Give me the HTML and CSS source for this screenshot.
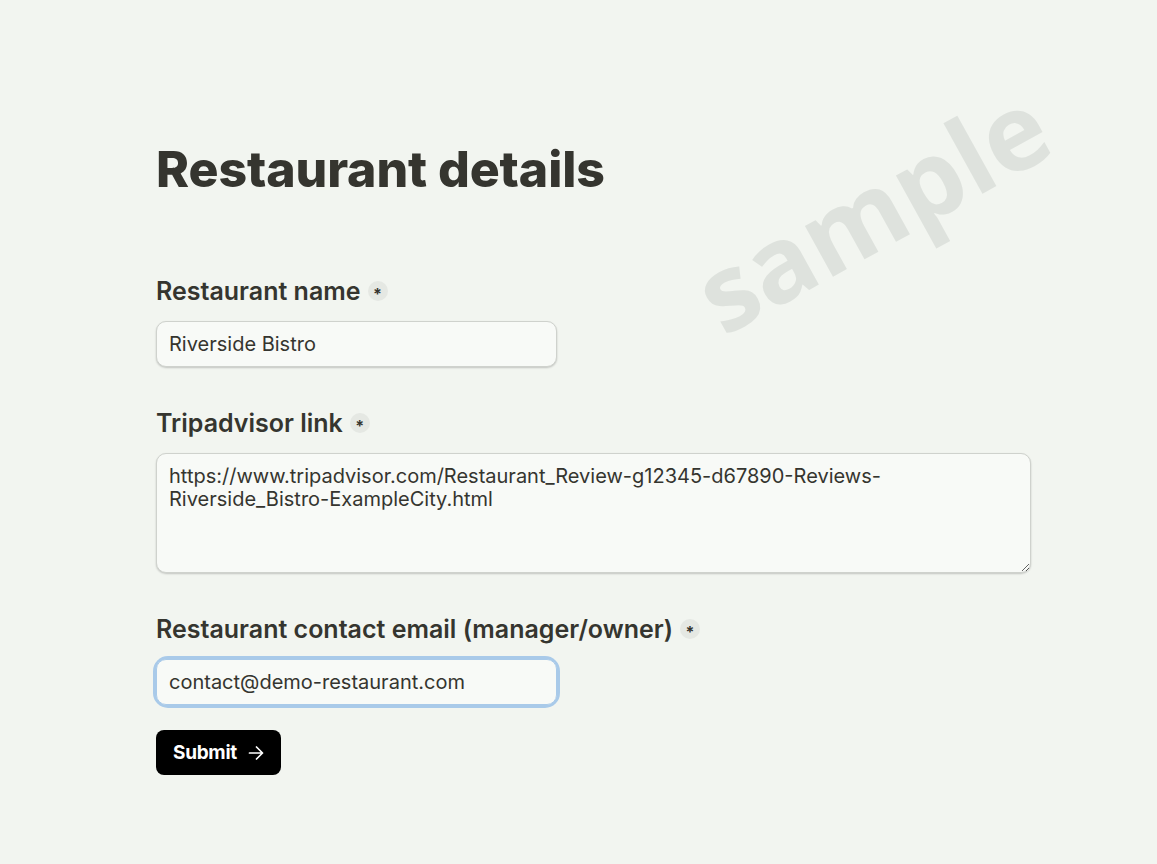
FILE: index.html
```html
<!DOCTYPE html>
<html>
  <head>
    <title>Restaurant details</title>
    <meta charset="utf-8" />
    <meta name="viewport" content="width=device-width, initial-scale=1" />
    <link rel="stylesheet" href="styles.css">
  </head>
  <body>
    <div class="watermark">sample</div>

    <main class="page">
      <h1>Restaurant details</h1>

      <form id="the-form">
        <div class="field">
          <label for="name-input" class="label">
            Restaurant name
            <span class="required">*</span>
          </label>
          <input type="text" id="name-input" class="text-input" value="Riverside Bistro" />
        </div>

        <div class="field">
          <label for="link-input" class="label">
            Tripadvisor link
            <span class="required">*</span>
          </label>
          <textarea id="link-input" class="text-area">https://www.tripadvisor.com/Restaurant_Review-g12345-d67890-Reviews-Riverside_Bistro-ExampleCity.html</textarea>
        </div>

        <div class="field field-last">
          <label for="email-input" class="label">
            Restaurant contact email (manager/owner)
            <span class="required">*</span>
          </label>
          <div class="focus-ring">
            <input type="email" id="email-input" class="text-input" value="contact@demo-restaurant.com" />
          </div>
        </div>

        <button type="submit" class="submit">
          Submit
          <svg width="18" height="18" viewBox="0 0 18 18" fill="none" stroke="currentColor" stroke-width="1.7" stroke-linecap="round" stroke-linejoin="round">
            <path d="M2.5 9h13M9.5 3l6 6-6 6" />
          </svg>
        </button>
      </form>
    </main>
  </body>
</html>
```

FILE: styles.css
```css
:root {
  --ink: #35352f;
  --bg: #f2f5f0;
  --field: #f8faf7;
}

* {
  box-sizing: border-box;
}

body {
  margin: 0;
  min-height: 864px;
  background: var(--bg);
  color: var(--ink);
  font-family: Inter, "Noto Sans", sans-serif;
  position: relative;
  overflow: hidden;
}

.watermark {
  position: absolute;
  left: 678px;
  top: 255px;
  font-family: "Open Sans", sans-serif;
  font-weight: 700;
  font-size: 106px;
  line-height: 1;
  color: #dee2dd;
  transform: rotate(-29deg);
  transform-origin: left top;
  pointer-events: none;
  user-select: none;
}

.page {
  position: relative;
  padding: 139px 126px 0 156px;
}

h1 {
  margin: 0 0 76px 0;
  font-size: 50px;
  line-height: 60px;
  font-weight: 800;
  letter-spacing: -0.1px;
}

.field {
  display: flex;
  flex-direction: column;
  align-items: flex-start;
  margin: 0 0 40px 0;
}

.field-last {
  margin-bottom: 25px;
}

.label {
  display: flex;
  align-items: center;
  gap: 7px;
  font-size: 25px;
  line-height: 32px;
  font-weight: 600;
  margin-bottom: 14px;
}

.required {
  display: inline-flex;
  align-items: center;
  justify-content: center;
  width: 20px;
  height: 20px;
  border-radius: 50%;
  background: #e5e8e3;
  font-size: 16px;
  line-height: 1;
  padding-top: 5px;
  font-weight: 700;
}

.text-input,
.text-area {
  font-family: Inter, "Noto Sans", sans-serif;
  font-size: 20px;
  color: var(--ink);
  background: var(--field);
  border: 1px solid #cfd2cd;
  border-radius: 10px;
  box-shadow: 0 1px 2px rgba(0, 0, 0, 0.2);
  padding: 0 12px;
  outline: none;
}

.text-input {
  width: 401px;
  height: 46px;
}

.text-area {
  width: 100%;
  height: 120px;
  padding: 11px 12px;
  line-height: 23px;
  resize: vertical;
}

.focus-ring {
  border-radius: 12px;
  box-shadow: 0 0 0 3px #a9cae9;
}

.focus-ring .text-input {
  border-color: #a9cae9;
  box-shadow: none;
}

.submit {
  display: inline-flex;
  align-items: center;
  gap: 10px;
  height: 45px;
  padding: 0 16px 0 17px;
  background: #000;
  color: #fff;
  border: none;
  border-radius: 8px;
  font-family: Inter, "Noto Sans", sans-serif;
  font-size: 19px;
  font-weight: 700;
  letter-spacing: -0.3px;
  cursor: pointer;
}
```
